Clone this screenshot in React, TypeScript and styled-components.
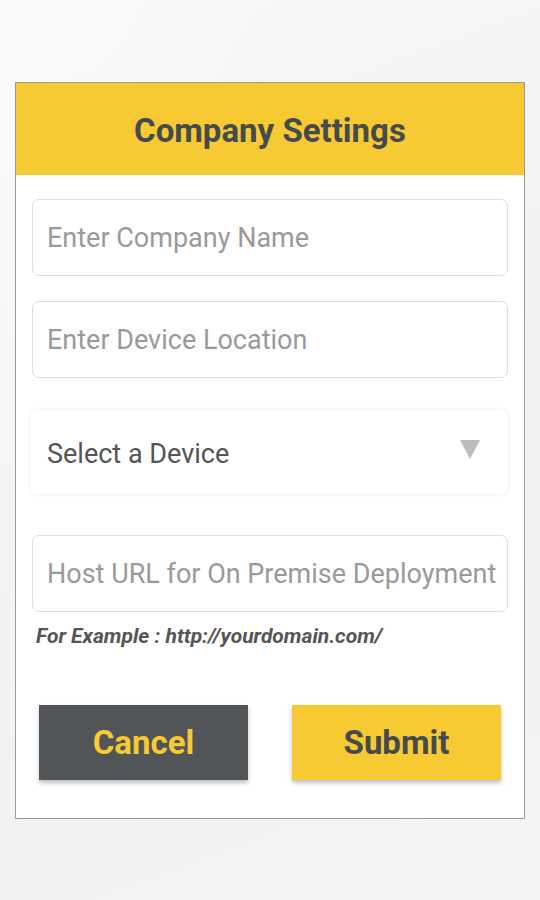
import React from "react";
import styled, { createGlobalStyle } from "styled-components";

const GlobalStyle = createGlobalStyle`
  html, body {
    margin: 0;
    padding: 0;
  }
  body {
    width: 540px;
    height: 900px;
    overflow: hidden;
    font-family: Roboto, "Liberation Sans", sans-serif;
    background:
      linear-gradient(115deg, rgba(255,255,255,0.5) 0%, rgba(255,255,255,0) 40%),
      linear-gradient(160deg, #f7f7f7 0%, #f1f1f1 55%, #f4f4f4 100%);
  }
`;

const Page = styled.div`
  padding-top: 82px;
  padding-left: 15px;
`;

const Card = styled.div`
  width: 508px;
  background: #ffffff;
  border: 1px solid #9a9a9a;
  box-sizing: content-box;
  padding-bottom: 38px;
`;

const Header = styled.div`
  height: 92px;
  background: #f7c932;
  display: flex;
  align-items: center;
  justify-content: center;
`;

const Title = styled.h1`
  margin: 2px 0 0 0;
  font-size: 33px;
  font-weight: 700;
  color: #454a4f;
`;

const Body = styled.div`
  padding: 24px 16px 0 16px;
  display: flex;
  flex-direction: column;
`;

const Field = styled.input<{ $gap: number }>`
  height: 77px;
  box-sizing: border-box;
  margin-bottom: ${(p) => p.$gap}px;
  border: 1.5px solid #dedede;
  border-radius: 7px;
  padding: 1px 6px 0 14px;
  font-family: Roboto, "Liberation Sans", sans-serif;
  font-size: 27px;
  color: #444;
  outline: none;
  background: #fff;
  &::placeholder {
    color: #9a9a9a;
  }
`;

const Select = styled.div`
  height: 84px;
  box-sizing: border-box;
  margin: 0 0 41px -2px;
  border-radius: 6px;
  box-shadow: 0 0 3px rgba(0, 0, 0, 0.12);
  display: flex;
  align-items: center;
  justify-content: space-between;
  padding: 4px 28px 0 17px;
  font-size: 27px;
  color: #555;
`;

const Arrow = styled.span`
  width: 0;
  height: 0;
  border-left: 10px solid transparent;
  border-right: 10px solid transparent;
  border-top: 19px solid #bcbcbc;
  margin-top: -10px;
`;

const Hint = styled.p`
  margin: 12px 0 0 4px;
  font-size: 21px;
  font-weight: 700;
  font-style: italic;
  color: #555;
`;

const Buttons = styled.div`
  display: flex;
  justify-content: space-between;
  padding: 57px 23px 0 23px;
`;

const Button = styled.button<{ $primary?: boolean }>`
  width: 209px;
  height: 75px;
  border: none;
  border-radius: 0;
  background: ${(p) => (p.$primary ? "#f7c932" : "#515558")};
  color: ${(p) => (p.$primary ? "#454a4f" : "#f7c932")};
  font-family: Roboto, "Liberation Sans", sans-serif;
  font-size: 33px;
  font-weight: 700;
  box-shadow: 0 3px 4px rgba(0, 0, 0, 0.25);
`;

export default function App() {
  return (
    <>
      <GlobalStyle />
      <Page>
        <Card>
          <Header>
            <Title>Company Settings</Title>
          </Header>
          <Body>
            <Field $gap={25} placeholder="Enter Company Name" />
            <Field $gap={32} placeholder="Enter Device Location" />
            <Select>
              Select a Device
              <Arrow />
            </Select>
            <Field $gap={0} placeholder="Host URL for On Premise Deployment" />
            <Hint>For Example : http://yourdomain.com/</Hint>
          </Body>
          <Buttons>
            <Button>Cancel</Button>
            <Button $primary>Submit</Button>
          </Buttons>
        </Card>
      </Page>
    </>
  );
}
